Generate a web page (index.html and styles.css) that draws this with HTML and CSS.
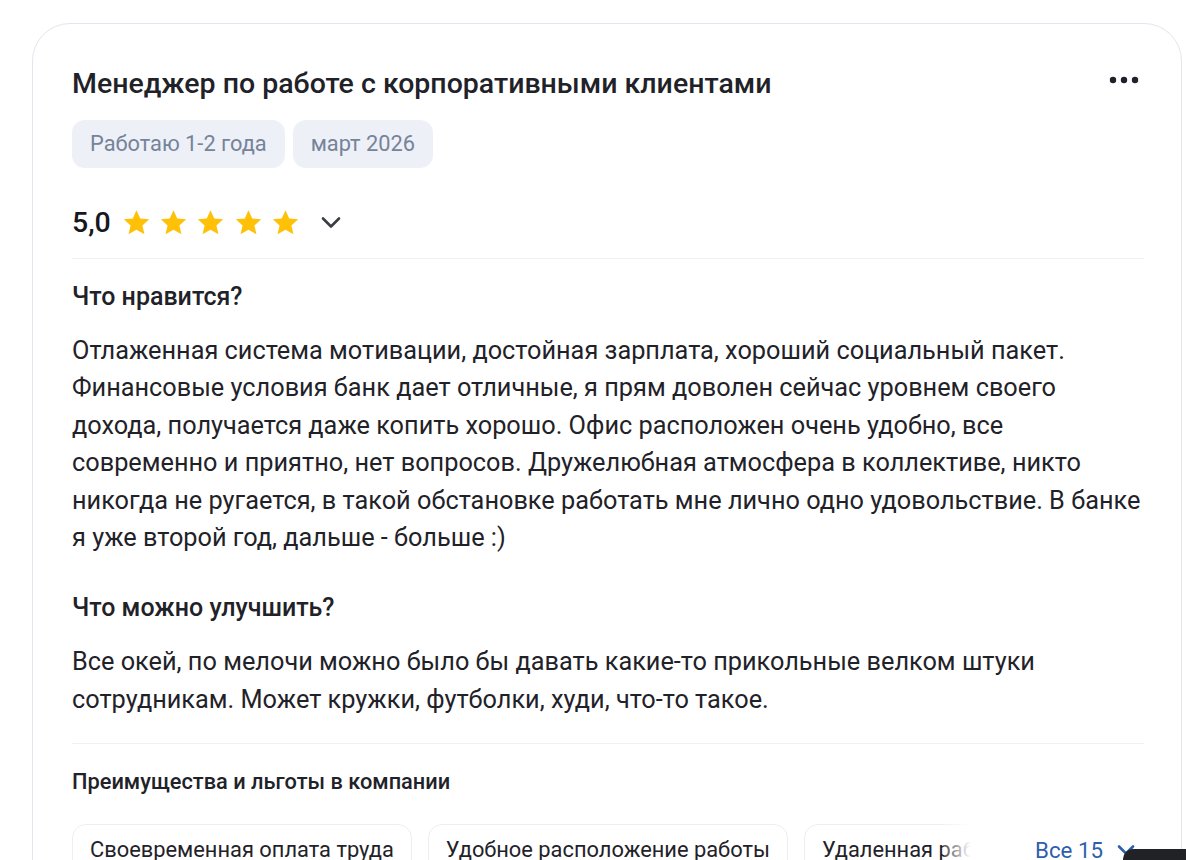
FILE: index.html
```html
<!DOCTYPE html>
<html lang="ru">
<head>
<meta charset="utf-8">
<link rel="stylesheet" href="styles.css">
</head>
<body>
<div class="card">
  <div class="head">
    <h2 class="title">Менеджер по работе с корпоративными клиентами</h2>
    <button class="more" aria-label="Ещё">
      <svg width="30" height="8" viewBox="0 0 30 8"><circle cx="4" cy="4" r="3.2" fill="#1f2228"/><circle cx="15" cy="4" r="3.2" fill="#1f2228"/><circle cx="26" cy="4" r="3.2" fill="#1f2228"/></svg>
    </button>
  </div>
  <div class="tags">
    <span class="tag">Работаю 1-2 года</span>
    <span class="tag">март 2026</span>
  </div>
  <div class="rating">
    <span class="score">5,0</span>
    <span class="stars">
      <svg class="star" viewBox="0 0 24 24"><path d="M12 1.8l3.1 6.9 7.4.7-5.6 5 1.7 7.4L12 17.9l-6.6 3.9 1.7-7.4-5.6-5 7.4-.7z" fill="#ffc107"/></svg>
      <svg class="star" viewBox="0 0 24 24"><path d="M12 1.8l3.1 6.9 7.4.7-5.6 5 1.7 7.4L12 17.9l-6.6 3.9 1.7-7.4-5.6-5 7.4-.7z" fill="#ffc107"/></svg>
      <svg class="star" viewBox="0 0 24 24"><path d="M12 1.8l3.1 6.9 7.4.7-5.6 5 1.7 7.4L12 17.9l-6.6 3.9 1.7-7.4-5.6-5 7.4-.7z" fill="#ffc107"/></svg>
      <svg class="star" viewBox="0 0 24 24"><path d="M12 1.8l3.1 6.9 7.4.7-5.6 5 1.7 7.4L12 17.9l-6.6 3.9 1.7-7.4-5.6-5 7.4-.7z" fill="#ffc107"/></svg>
      <svg class="star" viewBox="0 0 24 24"><path d="M12 1.8l3.1 6.9 7.4.7-5.6 5 1.7 7.4L12 17.9l-6.6 3.9 1.7-7.4-5.6-5 7.4-.7z" fill="#ffc107"/></svg>
    </span>
    <svg class="chev" width="24" height="24" viewBox="0 0 24 24"><path d="M4 8.5l8 8 8-8" fill="none" stroke="#3a3d44" stroke-width="2.6" stroke-linecap="round" stroke-linejoin="round"/></svg>
  </div>
  <div class="divider"></div>
  <section class="block">
    <h3 class="block-title">Что нравится?</h3>
    <p class="text">Отлаженная система мотивации, достойная зарплата, хороший социальный пакет. Финансовые условия банк дает отличные, я прям доволен сейчас уровнем своего дохода, получается даже копить хорошо. Офис расположен очень удобно, все современно и приятно, нет вопросов. Дружелюбная атмосфера в коллективе, никто никогда не ругается, в такой обстановке работать мне лично одно удовольствие. В банке я уже второй год, дальше - больше :)</p>
  </section>
  <section class="block">
    <h3 class="block-title">Что можно улучшить?</h3>
    <p class="text">Все окей, по мелочи можно было бы давать какие-то прикольные велком штуки сотрудникам. Может кружки, футболки, худи, что-то такое.</p>
  </section>
  <div class="divider divider-2"></div>
  <h4 class="perks-title">Преимущества и льготы в компании</h4>
  <div class="perks">
    <div class="chips">
      <span class="chip">Своевременная оплата труда</span>
      <span class="chip">Удобное расположение работы</span>
      <span class="chip">Удаленная работа</span>
      <span class="fade"></span>
    </div>
    <button class="all">Все 15
      <svg width="20" height="20" viewBox="0 0 20 20"><path d="M3 6.5l7 7 7-7" fill="none" stroke="#2f5faa" stroke-width="2.6" stroke-linecap="round" stroke-linejoin="round"/></svg>
    </button>
  </div>
</div>
<div class="widget"></div>
</body>
</html>
```

FILE: styles.css
```css
* { box-sizing: border-box; }
html, body { margin: 0; padding: 0; background: #fff; }
body {
  font-family: Roboto, "Noto Sans", sans-serif;
  color: #1f2228;
  overflow: hidden;
  height: 860px;
}
.card {
  margin: 23px 0 0 32px;
  width: 1150px;
  border: 1px solid #e3e6ee;
  border-radius: 38px;
  padding: 44px 37px 0 39px;
  height: 900px;
}
.head {
  display: flex;
  align-items: center;
  justify-content: space-between;
}
.title {
  margin: 0;
  font-size: 28.5px;
  font-weight: 500;
  line-height: 32px;
  color: #1f2228;
}
.more {
  border: 0;
  background: none;
  padding: 0;
  margin: 0 5px 8px 0;
  display: flex;
}
.tags {
  display: flex;
  gap: 8px;
  margin-top: 20px;
}
.tag {
  background: #edf0f7;
  color: #768399;
  font-size: 21.8px;
  line-height: 48px;
  padding: 0 18px;
  border-radius: 13px;
}
.rating {
  display: flex;
  align-items: center;
  margin-top: 32px;
  height: 44px;
}
.score {
  font-size: 28.5px;
  font-weight: 500;
  color: #16181d;
  margin-right: 11px;
}
.stars { display: flex; gap: 8.3px; }
.star { width: 29px; height: 29px; display: block; }
.chev { margin-left: 19px; }
.divider {
  height: 1px;
  background: #f0f1f6;
  margin-top: 14px;
}
.block { margin-top: 22px; }
.block + .block { margin-top: 36px; }
.block-title {
  margin: 0;
  font-size: 25px;
  font-weight: 500;
  line-height: 32px;
}
.text {
  margin: 19px 0 0;
  font-size: 25.3px;
  line-height: 37.4px;
  color: #1f2228;
}
.divider-2 { margin-top: 25px; }
.perks-title {
  margin: 24px 0 0;
  font-size: 21.8px;
  font-weight: 500;
  line-height: 28px;
}
.perks {
  display: flex;
  align-items: flex-start;
  margin-top: 28px;
}
.chips {
  position: relative;
  display: flex;
  gap: 16px;
  width: 910px;
  overflow: hidden;
  flex: none;
}
.chip {
  flex: none;
  border: 1px solid #eceef4;
  border-radius: 14px;
  padding: 0 17px;
  font-size: 21.85px;
  line-height: 50px;
  white-space: nowrap;
}
.fade {
  position: absolute;
  right: 0; top: 0;
  width: 38px; height: 60px;
  background: linear-gradient(to right, rgba(255,255,255,0.2), #fff 70%);
}
.all {
  border: 0;
  background: none;
  font-family: inherit;
  font-size: 22.3px;
  color: #2f5faa;
  display: flex;
  align-items: center;
  gap: 13px;
  padding: 0;
  margin-left: 53px;
  line-height: 52px;
}
.widget {
  position: absolute;
  left: 1123px;
  top: 849px;
  width: 80px;
  height: 40px;
  background: #202226;
  border-radius: 10px 0 0 0;
}
```
